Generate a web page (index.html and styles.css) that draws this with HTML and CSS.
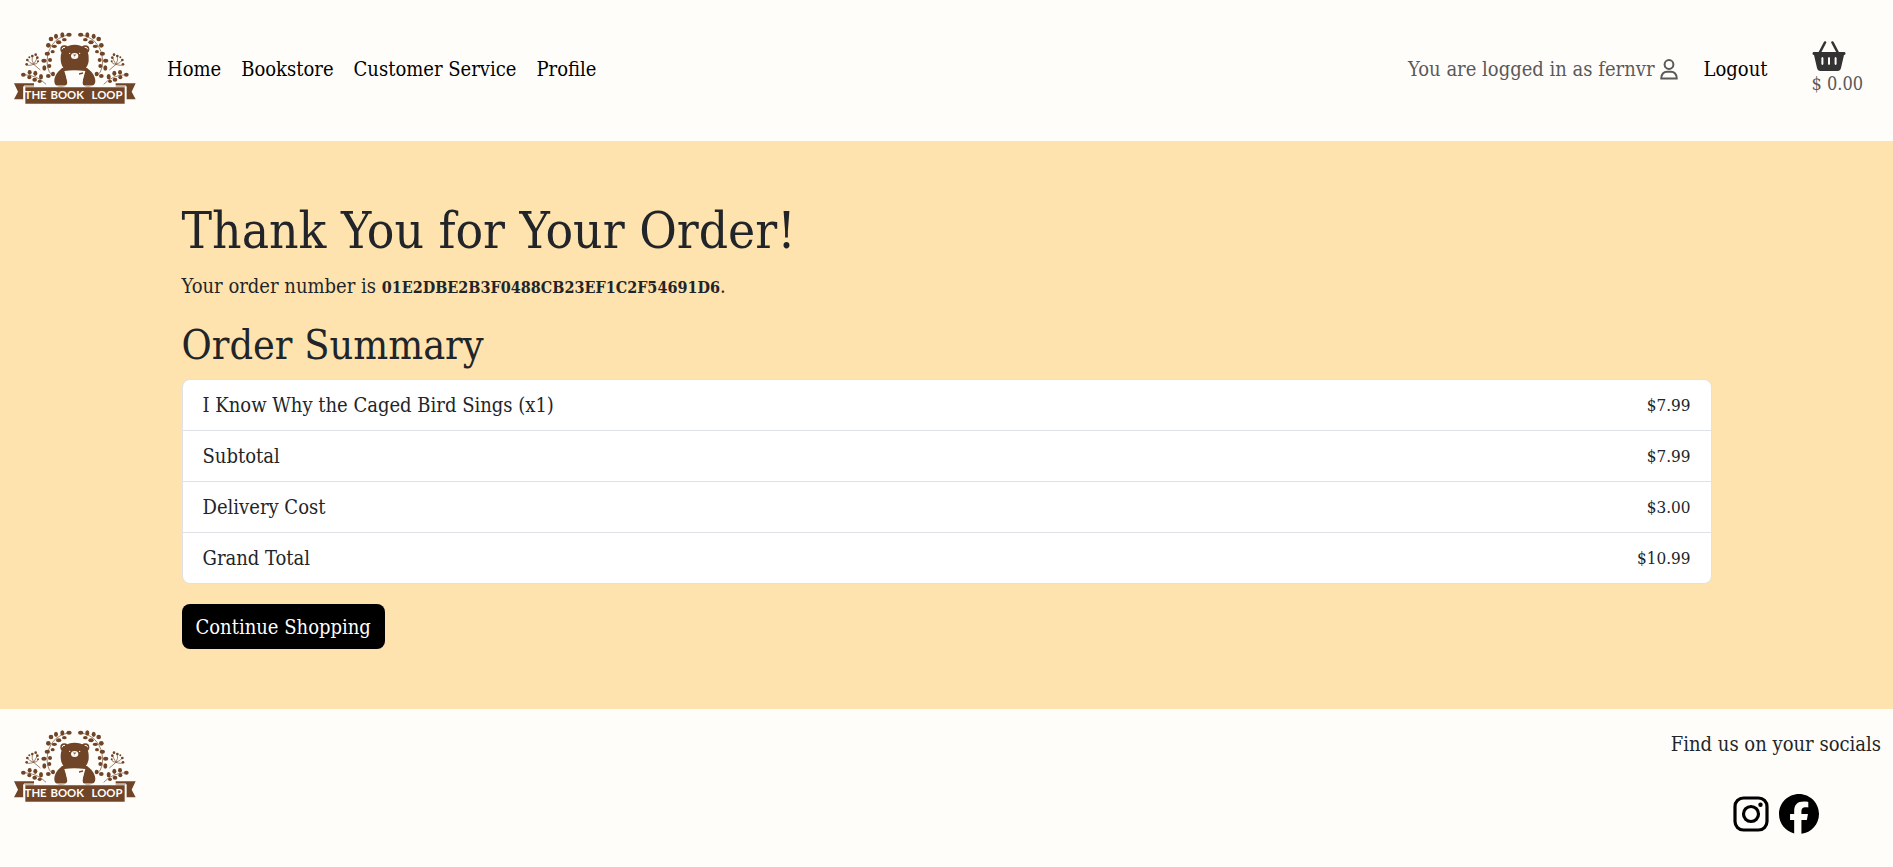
FILE: index.html
```html
<!DOCTYPE html>
<html lang="en">
<head>
<meta charset="utf-8">
<title>The Book Loop</title>
<link rel="stylesheet" href="styles.css">
</head>
<body>
<svg class="defs" width="0" height="0" aria-hidden="true">
  <defs>
    <g id="sprig">
      <path d="M208 45Q160 52 144 100Q134 150 158 168" fill="none" stroke="#6f4427" stroke-width="2"/>
      <g fill="#6f4427">
        <ellipse cx="207" cy="45" rx="8" ry="6"/><ellipse cx="187" cy="46" rx="6" ry="8"/><ellipse cx="193" cy="60" rx="7" ry="5"/>
        <ellipse cx="168" cy="50" rx="6" ry="8"/><ellipse cx="176" cy="68" rx="8" ry="6"/><ellipse cx="153" cy="58" rx="7" ry="7"/>
        <ellipse cx="163" cy="80" rx="8" ry="5"/><ellipse cx="145" cy="77" rx="7" ry="7"/><ellipse cx="142" cy="102" rx="8" ry="6"/>
        <ellipse cx="158" cy="96" rx="6" ry="5"/><ellipse cx="132" cy="123" rx="8" ry="6"/><ellipse cx="150" cy="121" rx="6" ry="6"/>
        <ellipse cx="133" cy="145" rx="6" ry="8"/><ellipse cx="148" cy="139" rx="6" ry="6"/><ellipse cx="145" cy="169" rx="7" ry="6"/>
        <ellipse cx="159" cy="163" rx="6" ry="7"/><ellipse cx="70" cy="165" rx="7" ry="6"/><ellipse cx="89" cy="158" rx="6" ry="7"/>
        <ellipse cx="88" cy="173" rx="6" ry="6"/><ellipse cx="106" cy="161" rx="6" ry="8"/><ellipse cx="104" cy="180" rx="7" ry="6"/>
        <ellipse cx="123" cy="171" rx="6" ry="8"/><ellipse cx="119" cy="185" rx="6" ry="5"/>
        <circle cx="80" cy="134" r="4"/><circle cx="82" cy="121" r="4"/><circle cx="88" cy="113" r="3"/><circle cx="97" cy="109" r="4"/><circle cx="107" cy="105" r="4"/><circle cx="112" cy="114" r="4"/><circle cx="114" cy="125" r="3"/>
      </g>
      <path d="M70 165Q112 166 138 194M121 151L101 134M101 134Q84 140 80 134M101 134Q88 130 82 121M101 134Q94 122 97 109M101 134Q108 122 112 114M101 134Q113 134 114 125" fill="none" stroke="#6f4427" stroke-width="2"/>
    </g>
    <symbol id="logo" viewBox="36 34 378 231">
      <use href="#sprig"/>
      <use href="#sprig" transform="translate(449 0) scale(-1 1)"/>
      <g fill="#6f4427">
        <circle cx="193" cy="89" r="12"/><circle cx="256" cy="89" r="12"/>
        <path d="M182 117C181 90 199 75 224 75S268 90 266 117C267 128 263 137 258 144C274 152 286 168 286 184C286 196 276 202 263 201Q249 201 247 190L253 153H196L202 190Q199 201 186 201C172 203 163 196 163 184C163 168 174 152 190 144C185 137 182 128 182 117Z"/>
        <path d="M185 145H262V160H185Z"/>
        <path d="M42 191H102V201H70V239H42L54 216Z"/><path d="M407 191H347V201H379V239H407L395 216Z"/>
        <path d="M76 203H374V252H76Z"/>
      </g>
      <path d="M193 154Q222 149 256 154L248 183Q246 191 249 197H201Q206 191 202 184Z" fill="#fffdf9"/>
      <path d="M186 89Q187 82 195 83M263 89Q262 82 254 83" fill="none" stroke="#fffdf9" stroke-width="3"/>
      <ellipse cx="224" cy="109" rx="11" ry="9" fill="#fffdf9"/>
      <path d="M220 105H228L224 109ZM223 109V114" fill="#6f4427" stroke="#6f4427"/>
      <circle cx="209" cy="101" r="2" fill="#fffdf9"/><circle cx="239" cy="101" r="2" fill="#fffdf9"/>
      <path d="M237 161L249 158V162L237 165Z" fill="#6f4427"/>
      <path d="M72 239V199H378V239" fill="none" stroke="#fffdf9" stroke-width="3"/>
      <text class="logo-text" y="239" text-anchor="middle"><tspan x="111">THE</tspan> <tspan x="206">BOOK</tspan> <tspan x="321">LOOP</tspan></text>
    </symbol>
  </defs>
</svg>
<header class="site-header">
  <a class="brand" href="#" aria-label="The Book Loop"><svg class="logo"><use href="#logo"/></svg></a>
  <nav class="nav">
    <a href="#">Home</a><a href="#">Bookstore</a><a href="#">Customer Service</a><a href="#">Profile</a>
  </nav>
  <div class="account">
    <span class="user">You are logged in as fernvr
      <svg class="user-icon" viewBox="0 0 18 21" fill="none" stroke="currentColor" stroke-width="2"><circle cx="9" cy="5.5" r="4.4"/><path d="M1.2 19.6C1 15 4 12.8 7 12.8H11C14 12.8 17 15 16.8 19.6Z" stroke-linejoin="round"/></svg>
    </span>
    <a class="logout" href="#">Logout</a>
    <a class="basket" href="#">
      <svg class="basket-icon" viewBox="0 0 34 30"><path d="M13 1.5L7.5 12M20.500 1.500L26 12" fill="none" stroke="#333" stroke-width="2.600" stroke-linecap="round"/><path fill="#333" fill-rule="evenodd" d="M1.500 11H32.500Q33.500 11 33.500 12.500T32 14L29 27Q28.300 30 25.500 30H8.500Q5.700 30 5 27L2 14Q.500 14 .500 12.500T1.500 11ZM9.400 17V23Q10.400 25 11.400 23V17Q10.400 15 9.400 17ZM16 17V23Q17 25 18 23V17Q17 15 16 17ZM22.600 17V23Q23.600 25 24.600 23V17Q23.600 15 22.600 17Z"/></svg>
      <span class="basket-total">$ 0.00</span>
    </a>
  </div>
</header>
<main class="main">
  <div class="container">
    <h1>Thank You for Your Order!</h1>
    <p class="order-number">Your order number is <strong>01E2DBE2B3F0488CB23EF1C2F54691D6</strong>.</p>
    <h2>Order Summary</h2>
    <ul class="summary">
      <li>I Know Why the Caged Bird Sings (x1)<span class="price">$7.99</span></li>
      <li>Subtotal<span class="price">$7.99</span></li>
      <li>Delivery Cost<span class="price">$3.00</span></li>
      <li>Grand Total<span class="price">$10.99</span></li>
    </ul>
    <a class="button" href="#">Continue Shopping</a>
  </div>
</main>
<footer class="site-footer">
  <a class="brand" href="#" aria-label="The Book Loop"><svg class="logo"><use href="#logo"/></svg></a>
  <div class="socials">
    <p>Find us on your socials</p>
    <div class="social-links">
      <a href="#" aria-label="Instagram"><svg class="instagram" viewBox="0 0 36 36"><rect x="2" y="2" width="32" height="32" rx="8.500" fill="none" stroke="#000" stroke-width="3.200"/><circle cx="18" cy="18" r="7.500" fill="none" stroke="#000" stroke-width="3.200"/><circle cx="27.500" cy="8.700" r="2.200"/></svg></a>
      <a href="#" aria-label="Facebook"><svg class="facebook" viewBox="0 0 512 512"><path d="M512 256C512 114.600 397.400 0 256 0S0 114.600 0 256C0 376 82.700 476.800 194.200 504.500V334.200H141.400V256H194.200V222.300C194.200 135.200 233.600 94.800 319.200 94.800C335.400 94.800 363.400 98 374.900 101.200V172C368.900 171.400 358.400 171 345.300 171C303.300 171 287.100 186.900 287.100 228.200V256H370.700L356.300 334.200H287V510.100C413.800 494.800 512 386.900 512 256Z"/></svg></a>
    </div>
  </div>
</footer>
</body>
</html>
```
FILE: styles.css
```css
* { box-sizing: border-box; }
body {
  margin: 0;
  background: #fffdf9;
  color: #212529;
  font: 20px/30px "DejaVu Serif Condensed", "DejaVu Serif", serif;
}
a { color: #000; text-decoration: none; }
p, h1, h2, ul { margin: 0; padding: 0; }
h1, h2 { font-weight: 400; margin-bottom: 10px; }
svg { display: block; }
.defs { position: absolute; }
.logo { width: 126px; height: 77px; }
.logo-text { font: 700 34px Lato, sans-serif; fill: #fffdf9; }
.site-header { display: flex; align-items: center; min-height: 141px; padding: 0 30px 3px 12px; }
.nav { display: flex; gap: 20px; margin-left: 29px; }
.account { display: flex; align-items: center; margin-left: auto; }
.user { display: flex; align-items: center; gap: 5px; color: #595959; }
.user-icon { width: 18px; height: 21px; }
.logout { margin: 0 44px 0 26px; }
.basket { color: #595959; }
.basket-icon { width: 34px; height: 30px; }
.basket-total { display: block; font-size: 18px; line-height: 26px; }
.main { background: #ffe3ae; padding: 60px 12px; }
.container { max-width: 1530px; margin: 0 auto; }
h1 { font-size: 51px; line-height: 60px; }
h2 { font-size: 41px; line-height: 48px; }
.order-number { margin-bottom: 20px; }
.order-number strong { font-size: 16px; line-height: 20px; }
.summary { list-style: none; margin-bottom: 20px; background: #fff; border: 1px solid #dee2e6; border-radius: 8px; }
.summary li { display: flex; justify-content: space-between; padding: 10px 20px; }
.summary li + li { border-top: 1px solid #dee2e6; }
.price { font-size: 17px; }
.button { display: block; width: fit-content; padding: 8px 14px 7px; border-radius: 8px; background: #000; color: #fff; }
.site-footer { display: flex; justify-content: space-between; align-items: flex-start; padding: 20px 12px 30px; }
.socials { display: flex; flex-direction: column; align-items: center; gap: 35px; }
.social-links { display: flex; align-items: center; gap: 10px; }
.instagram { width: 36px; height: 36px; }
.facebook { width: 40px; height: 40px; }
```
